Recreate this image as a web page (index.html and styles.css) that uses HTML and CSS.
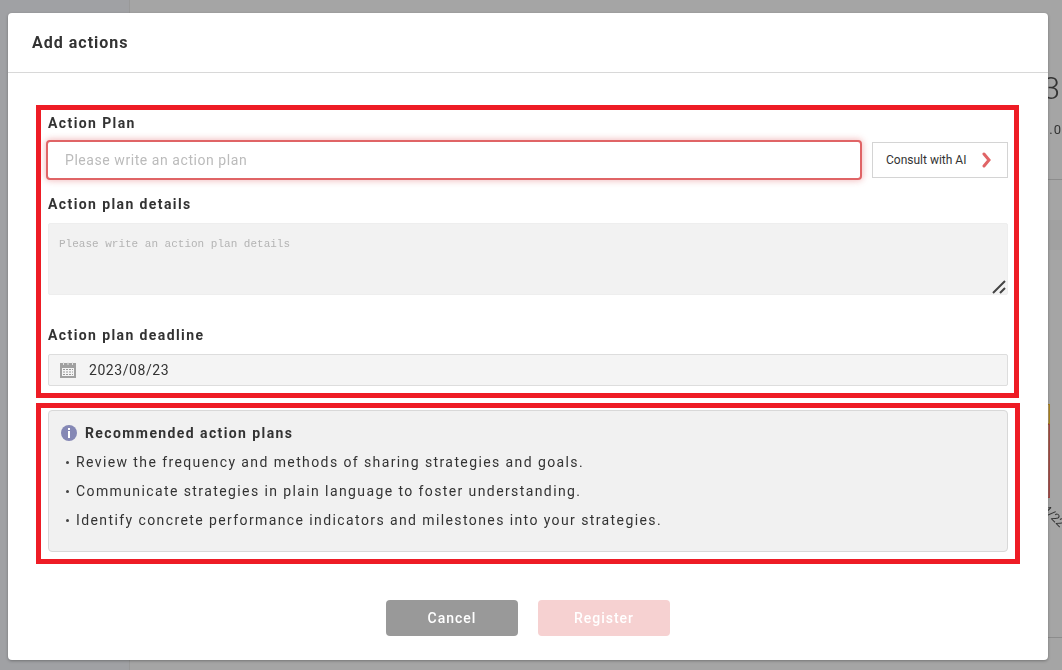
FILE: index.html
```html
<!DOCTYPE html>
<html lang="en">
<head>
<meta charset="utf-8">
<meta name="viewport" content="width=device-width, initial-scale=1">
<title>Add actions</title>
<link rel="stylesheet" href="styles.css">
</head>
<body>
<div class="page" aria-hidden="true">
  <div class="page-side"></div>
  <div class="page-main">
    <div class="score">
      <span class="score-value">3</span>
      <span class="score-sub">.0</span>
    </div>
    <div class="report">
      <div class="report-head"></div>
      <div class="chart">
        <div class="bar"><div class="bar-high"></div><div class="bar-low"></div></div>
        <span class="tick">4/22</span>
      </div>
    </div>
  </div>
</div>
<div class="overlay">
  <form class="modal" role="dialog" aria-labelledby="modal-title">
    <header class="modal-header"><h1 class="modal-title" id="modal-title">Add actions</h1></header>
    <div class="modal-body">
      <section class="frame frame-fields">
        <label class="label" for="plan">Action Plan</label>
        <div class="plan-row">
          <input class="plan-input" id="plan" type="text" placeholder="Please write an action plan">
          <button class="consult" type="button">
            <span>Consult with AI</span>
            <svg class="chevron" viewBox="0 0 10 16" aria-hidden="true"><path d="M2 2l5 6-5 6"/></svg>
          </button>
        </div>
        <label class="label" for="details">Action plan details</label>
        <div class="details-box">
          <textarea class="details" id="details" placeholder="Please write an action plan details"></textarea>
          <svg class="grip" viewBox="0 0 14 14" aria-hidden="true"><path d="M1 13L13 1M8 13l5-5"/></svg>
        </div>
        <label class="label" for="deadline">Action plan deadline</label>
        <div class="date">
          <svg class="calendar" viewBox="0 0 16 16" aria-hidden="true">
            <path class="calendar-fill" fill-rule="evenodd" d="M0 1h16v15H0zM2 6v8h12V6z"/>
            <path class="calendar-ring" d="M3.5 0v3M8 0v3M12.5 0v3"/>
            <path class="calendar-dots" d="M3 7.5h10M3 10h10M3 12.5h10"/>
          </svg>
          <input class="date-input" id="deadline" type="text" value="2023/08/23">
        </div>
      </section>
      <section class="frame frame-tips">
        <div class="tips">
          <h2 class="tips-title">
            <svg class="info" viewBox="0 0 16 16" aria-hidden="true"><circle cx="8" cy="8" r="8"/><path d="M7 3h2v2H7zM7 6h2v7H7z"/></svg>
            Recommended action plans
          </h2>
          <ul class="tips-list">
            <li>Review the frequency and methods of sharing strategies and goals.</li>
            <li>Communicate strategies in plain language to foster understanding.</li>
            <li>Identify concrete performance indicators and milestones into your strategies.</li>
          </ul>
        </div>
      </section>
    </div>
    <footer class="modal-footer">
      <button class="button button-cancel" type="button">Cancel</button>
      <button class="button button-register" type="submit" disabled>Register</button>
    </footer>
  </form>
</div>
</body>
</html>
```

FILE: styles.css
```css
* { box-sizing: border-box; }

body {
  margin: 0;
  background: #a5a5a5;
  color: #333;
  font-family: Roboto, "Liberation Sans", sans-serif;
  font-size: 14px;
  line-height: 20px;
  letter-spacing: 1px;
}

button, input, textarea {
  font: inherit;
  letter-spacing: inherit;
  color: inherit;
  margin: 0;
}

/* Dimmed page behind the dialog */
.page {
  position: fixed;
  inset: 0;
  display: flex;
  overflow: hidden;
}
.page-side {
  width: 130px;
  background: #a0a1a4;
  border-right: 1px solid #999;
}
.page-main { flex: 1; }
.score {
  display: flex;
  flex-direction: column;
  align-items: flex-end;
  height: 180px;
  padding-top: 68px;
  border-bottom: 1px solid #8c8c8c;
}
.score-value {
  padding-right: 1px;
  font-size: 32px;
  font-weight: 300;
  line-height: 40px;
}
.score-sub { padding-top: 12px; font-size: 13px; }
.report {
  height: 458px;
  padding-top: 40px;
  border-bottom: 1px solid #8c8c8c;
}
.report-head { height: 30px; background: #a1a1a1; }
.chart {
  display: flex;
  flex-direction: column;
  align-items: flex-end;
  padding-top: 154px;
}
.bar { width: 40px; margin-right: 12px; }
.bar-high {
  height: 20px;
  background: #b39a6a;
  border: 1px solid #a98420;
}
.bar-low {
  height: 74px;
  background: linear-gradient(#a9755f, #a05c5c);
  border: 1px solid #a04a45;
}
.tick {
  margin: 8px -4px 0 0;
  font-size: 12px;
  letter-spacing: 0;
  transform: rotate(45deg);
}

/* Dialog */
.overlay {
  position: relative;
  padding: 13px 14px 10px 8px;
}
.modal {
  background: #fff;
  border-radius: 4px;
  box-shadow: 0 1px 3px rgba(0, 0, 0, 0.3);
}
.modal-header {
  padding: 20px 24px 19px;
  border-bottom: 1px solid #d8d8d8;
}
.modal-title { margin: 0; font-size: 16px; font-weight: 700; line-height: 20px; }
.modal-body { padding: 32px 28px 0; }

.frame {
  padding: 3px 6px 7px 7px;
  border: 5px solid #ee1c25;
}
.frame-fields { margin-right: 1px; }
.frame-tips { margin-top: 5px; padding: 2px 7px 7px; }

.label {
  display: block;
  margin-bottom: 9px;
  font-weight: 700;
  letter-spacing: 0.1em;
}
.plan-row { display: flex; gap: 12px; margin-bottom: 16px; }
.plan-input {
  flex: 1;
  min-width: 0;
  height: 36px;
  padding: 0 17px;
  border: 0;
  border-radius: 2px;
  outline: 2px solid #e06466;
  box-shadow: 0 0 6px 3px rgba(224, 100, 102, 0.4);
  letter-spacing: 0.04em;
}
.plan-input::placeholder { color: #bbb; opacity: 1; }
.consult {
  display: flex;
  align-items: center;
  justify-content: space-between;
  width: 136px;
  height: 36px;
  padding: 0 15px 0 13px;
  background: #fff;
  border: 1px solid #d4d4d4;
  font-size: 12px;
  letter-spacing: 0;
}
.chevron {
  width: 10px;
  height: 16px;
  fill: none;
  stroke: #e06466;
  stroke-width: 3;
  stroke-linecap: round;
}
.details-box { position: relative; margin-bottom: 30px; }
.details {
  display: block;
  width: 100%;
  height: 72px;
  padding: 10px;
  background: #f2f2f2;
  border: 1px solid #eee;
  border-radius: 2px;
  font-family: "Liberation Mono", monospace;
  font-size: 11px;
  letter-spacing: 0;
  resize: none;
}
.details::placeholder { color: #b4b4b4; opacity: 1; }
.grip {
  position: absolute;
  right: 2px;
  bottom: 1px;
  width: 14px;
  height: 14px;
  fill: none;
  stroke: #444;
  stroke-width: 2;
}
.date {
  display: flex;
  align-items: center;
  gap: 13px;
  height: 32px;
  padding: 0 11px;
  background: #f4f4f4;
  border: 1px solid #ddd;
  border-radius: 2px;
}
.calendar { width: 16px; height: 16px; }
.calendar-fill { fill: #a0a0a0; }
.calendar-ring { stroke: #e4e4e4; }
.calendar-dots { stroke: #999; stroke-width: 1; stroke-dasharray: 2 1; }
.date-input {
  flex: 1;
  min-width: 0;
  padding: 0;
  background: transparent;
  border: 0;
  outline: 0;
  letter-spacing: 0.04em;
}

.tips {
  padding: 12px 12px 16px;
  background: #f1f1f1;
  border: 1px solid #d8d8d8;
  border-radius: 4px;
  letter-spacing: 0.1em;
}
.tips-title {
  display: flex;
  align-items: center;
  gap: 8px;
  margin: 0 0 5px;
  font-size: 14px;
  font-weight: 700;
}
.info { width: 16px; height: 16px; fill: #8588b5; }
.info path { fill: #fff; }
.tips-list { margin: 0; padding: 0; list-style: none; line-height: 29px; }
.tips-list li { display: flex; align-items: center; }
.tips-list li::before {
  content: "";
  width: 3px;
  height: 3px;
  margin: 0 7px 0 5px;
  background: #444;
  border-radius: 50%;
}

.modal-footer {
  display: flex;
  justify-content: center;
  gap: 20px;
  padding: 36px 0 24px;
}
.button {
  width: 132px;
  height: 36px;
  border: 0;
  border-radius: 4px;
  color: #fff;
  font-weight: 500;
}
.button-cancel { background: #999; }
.button-register { background: #f6d1d1; }
```
